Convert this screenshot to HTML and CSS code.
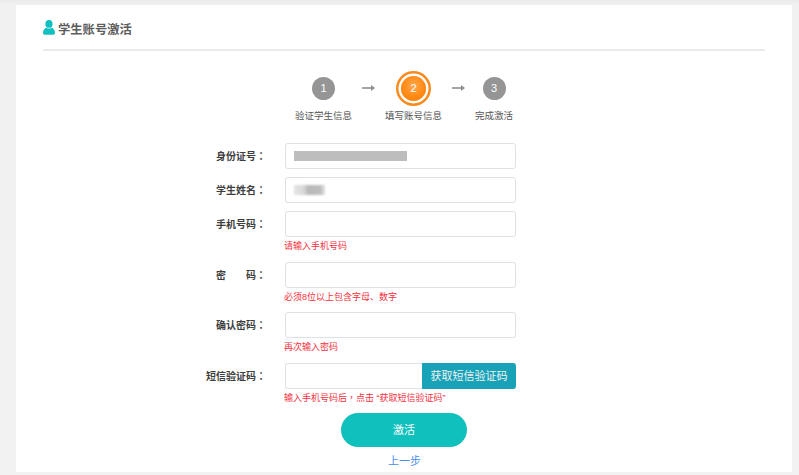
FILE: index.html
```html
<!DOCTYPE html>
<html lang="zh-CN">
<head>
<meta charset="utf-8">
<title>学生账号激活</title>
<link rel="stylesheet" href="styles.css">
</head>
<body>
<main class="card">
  <header class="head">
    <svg class="head-icon" width="12" height="15" viewBox="0 0 12 15" aria-hidden="true"><ellipse cx="6" cy="3.9" rx="3.6" ry="3.9" fill="#10bfbf"/><path d="M0 13c0-3 1.600-5 3.500-5.300C4.200 8.300 5 8.600 6 8.600s1.800-.3 2.500-.9C10.400 8 12 10 12 13c0 1.200-.8 1.700-1.800 1.700H1.800C.8 14.700 0 14.200 0 13z" fill="#10bfbf"/></svg>
    <h1 class="title">学生账号激活</h1>
  </header>

  <ol class="steps">
    <li class="step"><span class="dot-wrap"><span class="dot">1</span></span><span class="step-label">验证学生信息</span></li>
    <li class="arrow"><svg width="13" height="8" viewBox="0 0 13 8" aria-hidden="true"><path d="M0 4h11" stroke="#8f8f8f" stroke-width="1.600"/><path d="M9 1l4 3-4 3z" fill="#8f8f8f"/></svg></li>
    <li class="step"><span class="dot-wrap"><span class="dot dot-active">2</span></span><span class="step-label">填写账号信息</span></li>
    <li class="arrow"><svg width="13" height="8" viewBox="0 0 13 8" aria-hidden="true"><path d="M0 4h11" stroke="#8f8f8f" stroke-width="1.600"/><path d="M9 1l4 3-4 3z" fill="#8f8f8f"/></svg></li>
    <li class="step"><span class="dot-wrap"><span class="dot">3</span></span><span class="step-label">完成激活</span></li>
  </ol>

  <form class="form">
    <div class="row"><label class="label">身份证号<span class="cjk-mid" lang="zh-TW">：</span></label><div class="input"><span class="mask mask-id"></span></div></div>
    <div class="row"><label class="label">学生姓名<span class="cjk-mid" lang="zh-TW">：</span></label><div class="input"><span class="mask mask-name"></span></div></div>
    <div class="row"><label class="label">手机号码<span class="cjk-mid" lang="zh-TW">：</span></label><div class="input"></div><p class="hint">请输入手机号码</p></div>
    <div class="row"><label class="label label-spaced"><span>密</span><span>码<span class="cjk-mid" lang="zh-TW">：</span></span></label><div class="input"></div><p class="hint">必须8位以上包含字母、数字</p></div>
    <div class="row"><label class="label">确认密码<span class="cjk-mid" lang="zh-TW">：</span></label><div class="input"></div><p class="hint">再次输入密码</p></div>
    <div class="row"><label class="label">短信验证码<span class="cjk-mid" lang="zh-TW">：</span></label><div class="input input-code"><span class="code-btn">获取短信验证码</span></div><p class="hint">输入手机号码后<span class="cjk-mid" lang="zh-TW">，</span>点击 “获取短信验证码”</p></div>
    <button class="submit" type="button">激活</button>
    <a class="back" href="#">上一步</a>
  </form>
</main>
</body>
</html>
```
FILE: styles.css
```css
* { box-sizing: border-box; }
html, body { margin: 0; padding: 0; }
body {
  width: 799px;
  height: 475px;
  overflow: hidden;
  background: linear-gradient(#ebebeb 0, #f1f1f1 5px, #f2f2f2 100%);
  font-family: "Liberation Sans", "Noto Sans CJK SC", sans-serif;
  padding: 5px 7px 3px 16px;
}
.card {
  width: 776px;
  height: 467px;
  background: #fff;
  padding: 0 27px;
}
.head {
  display: flex;
  align-items: center;
  gap: 3px;
  height: 46px;
  padding-top: 4px;
  border-bottom: 2px solid #ebebeb;
}
.head-icon { margin-top: -3px; }
.title {
  margin: 0;
  font-size: 12.300px;
  font-weight: 700;
  color: #5d5d5d;
}
.steps {
  list-style: none;
  display: flex;
  margin: 0;
  padding: 19px 0 0 252px;
}
.step {
  display: flex;
  flex-direction: column;
  align-items: center;
}
.dot-wrap {
  display: flex;
  align-items: center;
  justify-content: center;
  width: 36px;
  height: 36px;
}
.dot {
  display: flex;
  align-items: center;
  justify-content: center;
  width: 23px;
  height: 23px;
  border-radius: 50%;
  background: #959595;
  color: #fff;
  font-size: 11px;
}
.dot-active {
  background: radial-gradient(circle at 50% 40%, #ffa850 0, #ff8a14 55%, #f77a02 100%);
  width: 25px;
  height: 25px;
  box-shadow: 0 0 0 2.500px #fff, 0 0 0 5px #f98a1e;
}
.step-label {
  margin-top: 3px;
  font-size: 9.500px;
  line-height: 13px;
  color: #555;
  white-space: nowrap;
}
.arrow {
  display: flex;
  justify-content: center;
  width: 33px;
  padding-top: 14px;
}
.arrow svg { display: block; }
.form {
  display: flex;
  flex-direction: column;
  padding-top: 21px;
}
.row {
  display: grid;
  grid-template-columns: 223px 231px;
  column-gap: 19px;
  margin-bottom: 8px;
}
.label {
  height: 26px;
  font-size: 10px;
  font-weight: 700;
  line-height: 28px;
  color: #3d3d3d;
  text-align: right;
}
.cjk-mid { font-family: "Noto Sans CJK TC", sans-serif; line-height: 1; }
.label-spaced {
  display: flex;
  justify-content: space-between;
  width: 50px;
  justify-self: end;
}
.input {
  display: flex;
  align-items: center;
  height: 26px;
  padding-left: 8px;
  background: #fff;
  border: 1px solid #dfe1e6;
  border-radius: 3px;
}
.mask { display: block; height: 10px; background: #bdbdbd; }
.mask-id { width: 113px; }
.mask-name {
  width: 31px;
  background: linear-gradient(90deg, #e4e4e4 0, #dadada 30%, #b9b9b9 45%, #bdbdbd 85%, #e6e6e6 100%);
  filter: blur(.8px);
}
.input-code { justify-content: flex-end; padding: 0; border-right: 0; }
.code-btn {
  width: 94px;
  height: 26px;
  margin: -1px 0;
  border-radius: 0 3px 3px 0;
  background: #18a2b8;
  color: #f2f2f2;
  font-size: 11px;
  line-height: 26px;
  text-align: center;
  white-space: nowrap;
}
.hint {
  grid-column: 2;
  margin: 0 0 0 -1px;
  height: 16.500px;
  font-size: 9px;
  line-height: 18px;
  color: #f5303e;
  white-space: nowrap;
}
.submit {
  align-self: flex-start;
  margin-left: 298px;
  width: 126px;
  height: 34px;
  padding: 0 0 2px;
  border: 0;
  border-radius: 17px;
  background: #10c0bd;
  color: #fff;
  font: 11px "Liberation Sans", "Noto Sans CJK SC", sans-serif;
}
.back {
  align-self: flex-start;
  margin: 7px 0 0 345px;
  font-size: 11px;
  line-height: 15px;
  color: #4a90e8;
  text-decoration: none;
}
```
